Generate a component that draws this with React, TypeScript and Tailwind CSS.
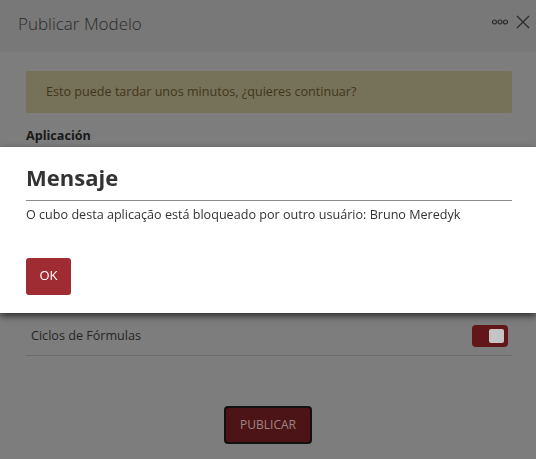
export default function App() {
  return (
    <div className="min-h-screen bg-[#7d7d7d] font-['Open_Sans',sans-serif] text-[12.6px] text-[#1f1f1f]">
      {/* dimmed publish dialog behind the message */}
      <header className="h-[52px] bg-[#787878] flex items-center justify-between pl-[18px] pr-[6px]">
        <h1 className="text-[17px] font-light text-[#2b2b2b] pb-[4px]">Publicar Modelo</h1>
        <div className="flex items-center gap-[8px] pb-[8px]">
          <svg width="16" height="6" viewBox="0 0 16 6" className="text-[#2b2b2b]">
            <circle cx="2.5" cy="3" r="2" fill="none" stroke="currentColor" strokeWidth="1.2" />
            <circle cx="8" cy="3" r="2" fill="none" stroke="currentColor" strokeWidth="1.2" />
            <circle cx="13.5" cy="3" r="2" fill="none" stroke="currentColor" strokeWidth="1.2" />
          </svg>
          <svg width="14" height="14" viewBox="0 0 14 14" className="text-[#2b2b2b]">
            <path d="M1 1 L13 13 M13 1 L1 13" stroke="currentColor" strokeWidth="1.3" fill="none" />
          </svg>
        </div>
      </header>

      <div className="pl-[26px] pr-[24px] pt-[19px]">
        <div className="h-[42px] bg-[#767159] rounded-[2px] flex items-center px-[20px] text-[#42361a]">
          Esto puede tardar unos minutos, ¿quieres continuar?
        </div>
        <div className="mt-[14px] font-bold text-[#1a1a1a]">Aplicación</div>

        <div className="mt-[172px] h-[38px] flex items-center justify-between border-b border-[#6c6c6c] pl-[5px] pr-[4px]">
          <span className="text-[#262626]">Ciclos de Fórmulas</span>
          <div className="w-[36px] h-[22px] rounded-[4px] bg-[#621619] flex items-center justify-end pr-[4px]">
            <div className="w-[15px] h-[14px] rounded-[2px] bg-[#c4c4c4]" />
          </div>
        </div>

        <div className="flex justify-center mt-[50px] pr-[2px]">
          <button className="w-[88px] h-[38px] rounded-[4px] border-2 border-[#111] bg-[#4c1416] text-[12px] text-[#a08686]">
            PUBLICAR
          </button>
        </div>
      </div>

      {/* message dialog */}
      <div className="fixed inset-0 flex items-center">
        <div className="w-full h-[166px] bg-white pl-[26px] pr-[24px] pt-[14px] shadow-[0_3px_7px_rgba(0,0,0,0.65)]">
          <h2 className="text-[22px] leading-[32px] font-bold text-[#333]">Mensaje</h2>
          <div className="mt-[7px] h-px bg-[#8c8c8c]" />
          <p className="mt-[5px] leading-[18px] text-[#333]">
            O cubo desta aplicação está bloqueado por outro usuário: Bruno Meredyk
          </p>
          <button className="mt-[34px] w-[45px] h-[37px] rounded-[3px] bg-[#9e2c32] text-white text-[13px]">
            OK
          </button>
        </div>
      </div>
    </div>
  );
}
